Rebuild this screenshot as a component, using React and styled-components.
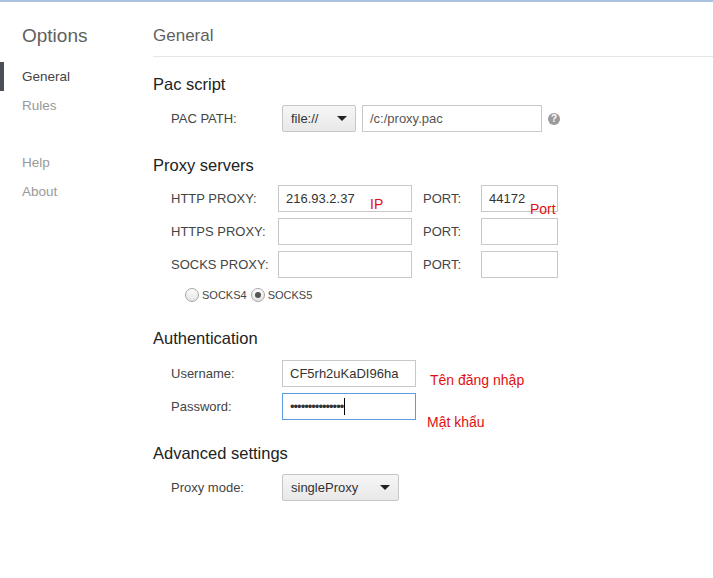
import React from "react";
import styled, { createGlobalStyle } from "styled-components";

const Global = createGlobalStyle`
  body { margin: 0; background: #fff; font-family: "Liberation Sans", Arial, sans-serif; color: #333; }
`;
const Page = styled.div`
  position: relative; width: 713px; height: 578px; border-top: 2px solid #a9c3de;
  display: flex; box-sizing: border-box;
`;
const Side = styled.nav`
  width: 153px; flex-shrink: 0; padding-top: 20px;
`;
const Brand = styled.div`
  font-size: 19px; color: #5f5f5f; padding-left: 22px; height: 27px; line-height: 27px; margin-bottom: 13px;
`;
const NavItem = styled.div`
  height: 29px; line-height: 29px; font-size: 13.5px; padding-left: 22px;
  color: ${p => (p.active ? "#444" : "#999")};
  border-left: 4px solid ${p => (p.active ? "#4a4f57" : "transparent")};
  margin-left: 0; padding-left: 18px;
  margin-top: ${p => (p.gap ? "28px" : "0")};
`;
const Main = styled.main`
  flex: 1; padding-top: 20px;
`;
const Title = styled.div`
  font-size: 17px; color: #5f5f5f; height: 27px; line-height: 27px; padding-bottom: 7px;
  border-bottom: 1px solid #e6e6e6;
`;
const Section = styled.section`
  margin-top: ${p => p.mt || 14}px;
`;
const H = styled.div`
  font-size: 16.5px; color: #222; height: 22px; line-height: 22px; margin-bottom: ${p => p.mb || 10}px;
`;
const Row = styled.div`
  display: flex; align-items: center; height: 27px; margin-bottom: ${p => p.mb || 6}px; padding-left: 18px;
`;
const Label = styled.div`
  width: ${p => p.w || 107}px; font-size: 13px; color: #444;
`;
const Input = styled.div`
  width: ${p => p.w || 134}px; height: 27px; box-sizing: border-box;
  border: 1px solid ${p => (p.focus ? "#5b9ae5" : "#c8c8c8")}; background: #fff;
  font-size: 13px; color: #333; padding: 0 7px; line-height: 25px; display: flex; align-items: center;
  white-space: nowrap; overflow: hidden;
`;
const Caret = styled.span`
  display: inline-block; width: 1px; height: 17px; background: #000; margin-left: 1px;
`;
const Select = styled.div`
  width: ${p => p.w}px; height: 27px; box-sizing: border-box; margin-left: 4px;
  border: 1px solid #c6c6c6; border-radius: 2px; background: linear-gradient(#f6f6f6, #e8e8e8);
  font-size: 13px; color: #333; padding: 0 8px; display: flex; align-items: center; justify-content: space-between;
`;
const Arrow = styled.span`
  width: 0; height: 0; border-left: 5px solid transparent; border-right: 5px solid transparent; border-top: 5px solid #222;
`;
const Help = styled.span`
  width: 12px; height: 12px; border-radius: 50%; background: #9a9a9a; color: #fff; font-size: 10px; font-weight: bold;
  display: inline-flex; align-items: center; justify-content: center; margin-left: 6px;
`;
const PortLabel = styled.div`
  width: 58px; padding-left: 11px; font-size: 13px; color: #444;
`;
const Radios = styled.div`
  display: flex; align-items: center; padding-left: 32px; height: 24px; font-size: 11px; color: #444; margin-bottom: 20px;
`;
const Radio = styled.span`
  width: 12px; height: 12px; border-radius: 50%; border: 1px solid #a5a5a5; background: linear-gradient(#fff, #e3e3e3);
  display: inline-flex; align-items: center; justify-content: center; margin: 0 3px 0 ${p => (p.first ? 0 : 4)}px;
  &::after { content: ""; width: 6px; height: 6px; border-radius: 50%; background: ${p => (p.on ? "#555" : "transparent")}; }
`;
const Note = styled.span`
  position: absolute; color: #e01010; font-size: 14px; font-family: "Liberation Sans", Arial, sans-serif;
  left: ${p => p.x}px; top: ${p => p.y}px;
`;

export default function App() {
  return (
    <Page>
      <Global />
      <Side>
        <Brand>Options</Brand>
        <NavItem active>General</NavItem>
        <NavItem>Rules</NavItem>
        <NavItem gap>Help</NavItem>
        <NavItem>About</NavItem>
      </Side>
      <Main>
        <Title>General</Title>
        <Section mt={16}>
          <H mb={10}>Pac script</H>
          <Row>
            <Label w={107}>PAC PATH:</Label>
            <Select w={74} style={{ marginRight: 6 }}>file://<Arrow /></Select>
            <Input w={180} style={{ color: "#555" }}>/c:/proxy.pac</Input>
            <Help>?</Help>
          </Row>
        </Section>
        <Section mt={22}>
          <H mb={9}>Proxy servers</H>
          <Row>
            <Label>HTTP PROXY:</Label><Input>216.93.2.37</Input>
            <PortLabel>PORT:</PortLabel><Input w={77}>44172</Input>
          </Row>
          <Row>
            <Label>HTTPS PROXY:</Label><Input />
            <PortLabel>PORT:</PortLabel><Input w={77} />
          </Row>
          <Row mb={5}>
            <Label>SOCKS PROXY:</Label><Input />
            <PortLabel>PORT:</PortLabel><Input w={77} />
          </Row>
          <Radios>
            <Radio first />SOCKS4<Radio on />SOCKS5
          </Radios>
        </Section>
        <Section mt={0}>
          <H mb={11}>Authentication</H>
          <Row>
            <Label w={111}>Username:</Label><Input w={134}>CF5rh2uKaDI96ha</Input>
          </Row>
          <Row>
            <Label w={111}>Password:</Label>
            <Input w={134} focus style={{ letterSpacing: "-1px" }}>•••••••••••••••<Caret /></Input>
          </Row>
        </Section>
        <Section mt={22}>
          <H mb={10}>Advanced settings</H>
          <Row>
            <Label w={107}>Proxy mode:</Label>
            <Select w={117}>singleProxy<Arrow /></Select>
          </Row>
        </Section>
      </Main>
      <Note x={370} y={194}>IP</Note>
      <Note x={530} y={199}>Port</Note>
      <Note x={430} y={370}>Tên đăng nhập</Note>
      <Note x={427} y={412}>Mật khẩu</Note>
    </Page>
  );
}
